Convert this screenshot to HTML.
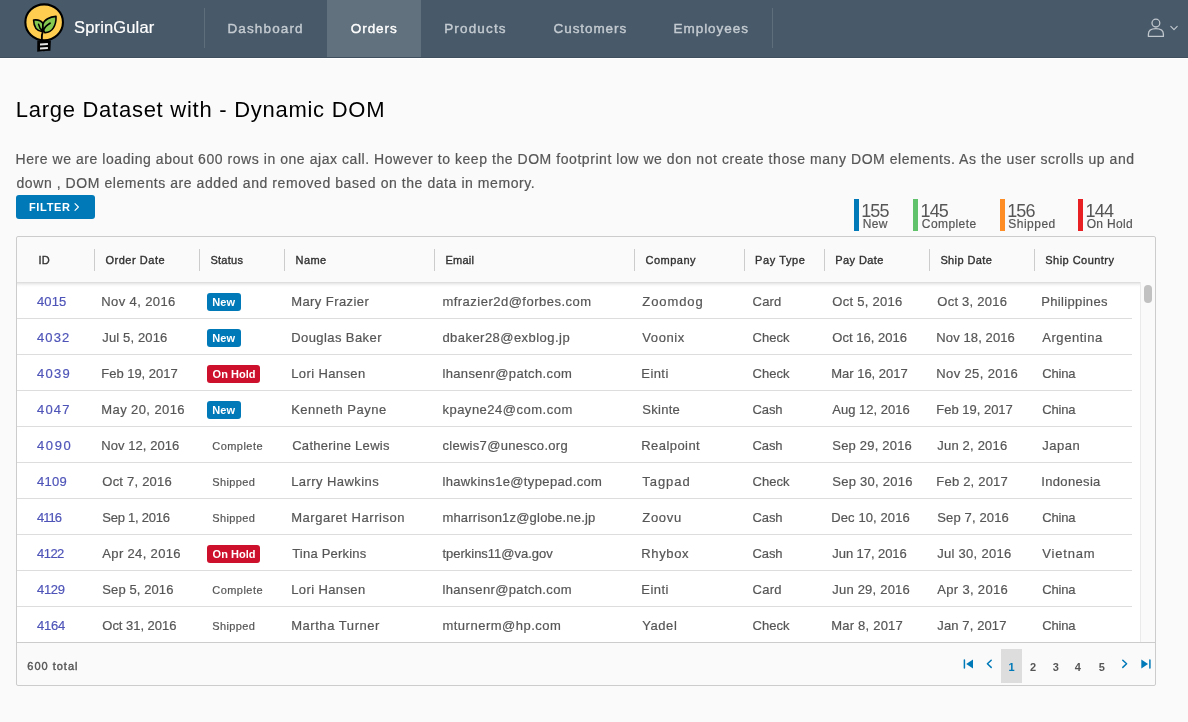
<!DOCTYPE html>
<html lang="en">
<head>
<meta charset="utf-8">
<title>SprinGular</title>
<style>
html,body{margin:0;padding:0}
body{width:1188px;height:722px;overflow:hidden;background:#fafafa;font-family:"Liberation Sans",sans-serif;color:#565656;position:relative;will-change:transform}
.abs,.t{position:absolute}
.t{white-space:nowrap;line-height:1}
header{position:absolute;left:0;top:0;width:1188px;height:57px;background:#485969}
.hline{position:absolute;left:0;top:57px;width:1188px;height:1px;background:#3f4f5e}
.wline{position:absolute;left:0;top:58px;width:1188px;height:1px;background:#fff}
.navbg{position:absolute;left:327px;top:0;width:94px;height:57px;background:#61717d}
.nav{top:21.5px;font-size:13.5px;color:#c4cbd1;-webkit-text-stroke:0.4px currentColor}
.nav.act{color:#fff}
.vsep{position:absolute;top:8px;width:1px;height:40px;background:#5e6e7b}
.brand{top:19px;font-size:16.5px;color:#fff;-webkit-text-stroke:0.2px #fff}
.h1{top:99px;font-size:22px;color:#000}
.p{font-size:14px;color:#565656;-webkit-text-stroke:0.2px #565656}
.btn{position:absolute;left:16px;top:195px;width:79px;height:24px;background:#0079b8;border-radius:3px}
.bt{top:202px;font-size:11px;font-weight:bold;color:#fff}
.bar{position:absolute;top:199px;width:5px;height:32px}
.num{top:201.5px;font-size:18px;color:#565656}
.lbl{top:217.7px;font-size:12px;color:#565656;-webkit-text-stroke:0.2px #565656}
.grid{position:absolute;left:16px;top:236px;width:1138px;height:448px;border:1px solid #ccc;border-radius:2px;background:#fafafa}
.rowsbg{position:absolute;left:17px;top:282px;width:1123px;height:360px;background:#fff;border-right:1px solid #eaeaea}
.hshadow{position:absolute;left:17px;top:282px;width:1123px;height:5px;background:linear-gradient(#d8d8d8,#ededed 35%,#f9f9f9 70%,#fff)}
.rl{position:absolute;left:17px;width:1115px;height:1px;background:#ddd}
.fl{position:absolute;left:17px;top:642px;width:1138px;height:1px;background:#ccc}
.csep{position:absolute;top:249px;width:1px;height:22px;background:#ccc}
.h{top:255px;font-size:11px;color:#313131;-webkit-text-stroke:0.35px #313131}
.c{font-size:13px;color:#565656;-webkit-text-stroke:0.2px currentColor}
.id{color:#4f55b8}
.badge{position:absolute;height:18px;border-radius:3px}
.b-new{background:#0079b8;width:34px}
.b-hold{background:#cd112d;width:53px}
.bx{font-size:11px;font-weight:bold;color:#fff}
.st{font-size:11px;color:#565656;-webkit-text-stroke:0.2px #565656}
.thumb{position:absolute;left:1144px;top:285px;width:8px;height:18px;border-radius:4px;background:#c1c1c1}
.pg{font-size:11px;font-weight:bold;color:#565656;top:661.5px}
.ft{top:661px;font-size:11px;color:#565656;-webkit-text-stroke:0.4px #565656}
.cur{position:absolute;left:1001px;top:649px;width:21px;height:34px;background:#ddd}
</style>
</head>
<body>
<header></header>
<div class="hline"></div>
<div class="wline"></div>
<div class="navbg"></div>
<svg class="abs" style="left:20px;top:0" width="48" height="56" viewBox="0 0 48 56">
<path d="M17.3 40.6 L30.9 40.6 L30.4 50.7 L24.4 51 L24 51.7 L23.4 51.1 L17.2 51.7 Z" fill="#000"/>
<path d="M20 43.5 L27.9 43 L27.9 45 L20 45.5 Z M20 47.5 L27.9 47 L27.9 49 L20 49.5 Z" fill="#e6e6e6"/>
<ellipse cx="24.15" cy="22.3" rx="18.8" ry="17.95" fill="#ffce51" stroke="#000" stroke-width="2.1"/>
<path d="M13.6 20 C17 19.6 21.2 20.8 22.8 23.2 C23.2 26 22.8 29.4 21.8 31.4 C16.3 30.8 13.8 26 13.6 20 Z" fill="#85c951" stroke="#000" stroke-width="1.6" stroke-linejoin="round"/>
<path d="M36 16.4 C30 16.8 24 19.5 22.9 24.5 C22.6 27.8 23.4 31 24.6 32.6 C32.5 33 36.4 25 36 16.4 Z" fill="#85c951" stroke="#000" stroke-width="1.6" stroke-linejoin="round"/>
<path d="M21.8 41 C21.5 37 21.8 33.5 23.2 30.5 C24.4 27.5 27.6 24.6 30 23.2" fill="none" stroke="#000" stroke-width="1.8" stroke-linecap="round"/>
<path d="M18.6 24.4 C19.2 27.2 20.8 29.8 22.8 31.2" fill="none" stroke="#000" stroke-width="1.6" stroke-linecap="round"/>
</svg>
<span class="t brand" style="left:74.1px;letter-spacing:0.136px;">SprinGular</span>
<div class="vsep" style="left:204px"></div>
<span class="t nav" style="left:227.5px;letter-spacing:1.121px;">Dashboard</span>
<span class="t nav act" style="left:350.8px;letter-spacing:0.938px;">Orders</span>
<span class="t nav" style="left:444.2px;letter-spacing:1.154px;">Products</span>
<span class="t nav" style="left:553.6px;letter-spacing:0.911px;">Customers</span>
<span class="t nav" style="left:673.5px;letter-spacing:0.959px;">Employees</span>
<div class="vsep" style="left:772px"></div>
<svg class="abs" style="left:1144px;top:14px" width="40" height="28" viewBox="0 0 40 28">
<circle cx="11.9" cy="9.1" r="3.9" fill="none" stroke="#c0c7cd" stroke-width="1.3"/>
<path d="M4.4 22.4 L4.4 20.2 C4.4 16.6 7.6 14.6 11.9 14.6 C16.2 14.6 19.4 16.6 19.4 20.2 L19.4 22.4 Z" fill="none" stroke="#c0c7cd" stroke-width="1.3" stroke-linejoin="round"/>
<path d="M26.8 12.4 L30 15.6 L33.2 12.4" fill="none" stroke="#c4cbd1" stroke-width="1.1" stroke-linecap="round" stroke-linejoin="round"/>
</svg>
<span class="t h1" style="left:15.7px;letter-spacing:0.736px;">Large Dataset with - Dynamic DOM</span>
<span class="t p" style="left:15.5px;top:152px;letter-spacing:0.555px;">Here we are loading about 600 rows in one ajax call. However to keep the DOM footprint low we don not create those many DOM elements. As the user scrolls up and</span>
<span class="t p" style="left:16.5px;top:176px;letter-spacing:0.566px;">down , DOM elements are added and removed based on the data in memory.</span>
<div class="btn"><svg class="abs" style="left:57px;top:7px" width="8" height="10" viewBox="0 0 8 10"><path d="M2 1.6 L5.4 5 L2 8.4" fill="none" stroke="#fff" stroke-width="1.1" stroke-linecap="round" stroke-linejoin="round"/></svg></div>
<span class="t bt" style="left:29px;letter-spacing:0.653px;">FILTER</span>
<div class="bar" style="left:854px;background:#0079b8"></div><span class="t num" style="left:861.2px;letter-spacing:-0.911px;">155</span><span class="t lbl" style="left:862.8px;letter-spacing:0.33px;">New</span>
<div class="bar" style="left:913px;background:#60c36c"></div><span class="t num" style="left:920.5px;letter-spacing:-0.861px;">145</span><span class="t lbl" style="left:921.8px;letter-spacing:0.417px;">Complete</span>
<div class="bar" style="left:1000px;background:#fe8d26"></div><span class="t num" style="left:1007.2px;letter-spacing:-0.911px;">156</span><span class="t lbl" style="left:1008.2px;letter-spacing:0.506px;">Shipped</span>
<div class="bar" style="left:1078px;background:#e82024"></div><span class="t num" style="left:1085.4px;letter-spacing:-0.761px;">144</span><span class="t lbl" style="left:1086.7px;letter-spacing:0.325px;">On Hold</span>
<div class="grid"></div>
<div class="rowsbg"></div>
<div class="hshadow"></div>
<div class="csep" style="left:94px"></div><div class="csep" style="left:199px"></div><div class="csep" style="left:284px"></div><div class="csep" style="left:434px"></div><div class="csep" style="left:634px"></div><div class="csep" style="left:744px"></div><div class="csep" style="left:824px"></div><div class="csep" style="left:929px"></div><div class="csep" style="left:1034px"></div>
<span class="t h" style="left:38.4px;letter-spacing:0.344px;">ID</span><span class="t h" style="left:105.4px;letter-spacing:0.545px;">Order Date</span><span class="t h" style="left:210.4px;letter-spacing:0.263px;">Status</span><span class="t h" style="left:295.6px;letter-spacing:0.392px;">Name</span><span class="t h" style="left:445.5px;letter-spacing:0.21px;">Email</span><span class="t h" style="left:645.5px;letter-spacing:0.487px;">Company</span><span class="t h" style="left:755px;letter-spacing:0.608px;">Pay Type</span><span class="t h" style="left:835.3px;letter-spacing:0.41px;">Pay Date</span><span class="t h" style="left:940.4px;letter-spacing:0.389px;">Ship Date</span><span class="t h" style="left:1045.3px;letter-spacing:0.465px;">Ship Country</span>
<div class="rl" style="top:318px"></div><span class="t c id" style="left:37px;top:295px;letter-spacing:0.103px;">4015</span><span class="t c" style="left:101.3px;top:295px;letter-spacing:0.383px;">Nov 4, 2016</span><div class="badge b-new" style="left:207px;top:293px"></div><span class="t bx" style="left:212.3px;top:297px;letter-spacing:0.069px;">New</span><span class="t c" style="left:291.2px;top:295px;letter-spacing:0.417px;">Mary Frazier</span><span class="t c" style="left:442.4px;top:295px;letter-spacing:0.486px;">mfrazier2d@forbes.com</span><span class="t c" style="left:642.3px;top:295px;letter-spacing:0.902px;">Zoomdog</span><span class="t c" style="left:752.6px;top:295px;letter-spacing:0.151px;">Card</span><span class="t c" style="left:832.3px;top:295px;letter-spacing:0.272px;">Oct 5, 2016</span><span class="t c" style="left:937.3px;top:295px;letter-spacing:0.242px;">Oct 3, 2016</span><span class="t c" style="left:1041.3px;top:295px;letter-spacing:0.333px;">Philippines</span>
<div class="rl" style="top:354px"></div><span class="t c id" style="left:37px;top:331px;letter-spacing:1.103px;">4032</span><span class="t c" style="left:102.3px;top:331px;letter-spacing:0.133px;">Jul 5, 2016</span><div class="badge b-new" style="left:207px;top:329px"></div><span class="t bx" style="left:212.3px;top:333px;letter-spacing:0.069px;">New</span><span class="t c" style="left:291.2px;top:331px;letter-spacing:0.422px;">Douglas Baker</span><span class="t c" style="left:442.4px;top:331px;letter-spacing:0.458px;">dbaker28@exblog.jp</span><span class="t c" style="left:642.3px;top:331px;letter-spacing:0.594px;">Voonix</span><span class="t c" style="left:752.6px;top:331px;letter-spacing:0.013px;">Check</span><span class="t c" style="left:832.3px;top:331px;letter-spacing:0.026px;">Oct 16, 2016</span><span class="t c" style="left:936.3px;top:331px;letter-spacing:0.109px;">Nov 18, 2016</span><span class="t c" style="left:1042.3px;top:331px;letter-spacing:0.535px;">Argentina</span>
<div class="rl" style="top:390px"></div><span class="t c id" style="left:37px;top:367px;letter-spacing:1.237px;">4039</span><span class="t c" style="left:101.3px;top:367px;letter-spacing:-0.026px;">Feb 19, 2017</span><div class="badge b-hold" style="left:207px;top:365px"></div><span class="t bx" style="left:212.6px;top:369px;letter-spacing:0.008px;">On Hold</span><span class="t c" style="left:291.2px;top:367px;letter-spacing:0.393px;">Lori Hansen</span><span class="t c" style="left:442.4px;top:367px;letter-spacing:0.376px;">lhansenr@patch.com</span><span class="t c" style="left:641.3px;top:367px;letter-spacing:0.425px;">Einti</span><span class="t c" style="left:752.6px;top:367px;letter-spacing:0.013px;">Check</span><span class="t c" style="left:831.3px;top:367px;letter-spacing:-0.025px;">Mar 16, 2017</span><span class="t c" style="left:936.3px;top:367px;letter-spacing:0.372px;">Nov 25, 2016</span><span class="t c" style="left:1042.3px;top:367px;letter-spacing:-0.184px;">China</span>
<div class="rl" style="top:426px"></div><span class="t c id" style="left:37px;top:403px;letter-spacing:1.17px;">4047</span><span class="t c" style="left:101.3px;top:403px;letter-spacing:0.405px;">May 20, 2016</span><div class="badge b-new" style="left:207px;top:401px"></div><span class="t bx" style="left:212.3px;top:405px;letter-spacing:0.069px;">New</span><span class="t c" style="left:291.2px;top:403px;letter-spacing:0.51px;">Kenneth Payne</span><span class="t c" style="left:442.4px;top:403px;letter-spacing:0.508px;">kpayne24@com.com</span><span class="t c" style="left:642.3px;top:403px;letter-spacing:0.28px;">Skinte</span><span class="t c" style="left:752.6px;top:403px;letter-spacing:-0.139px;">Cash</span><span class="t c" style="left:832.3px;top:403px;letter-spacing:0.008px;">Aug 12, 2016</span><span class="t c" style="left:936.3px;top:403px;letter-spacing:-0.008px;">Feb 19, 2017</span><span class="t c" style="left:1042.3px;top:403px;letter-spacing:-0.209px;">China</span>
<div class="rl" style="top:462px"></div><span class="t c id" style="left:37px;top:439px;letter-spacing:1.603px;">4090</span><span class="t c" style="left:101.3px;top:439px;letter-spacing:0.054px;">Nov 12, 2016</span><span class="t st" style="left:212.3px;top:441px;letter-spacing:0.449px;">Complete</span><span class="t c" style="left:292.2px;top:439px;letter-spacing:0.292px;">Catherine Lewis</span><span class="t c" style="left:442.4px;top:439px;letter-spacing:0.305px;">clewis7@unesco.org</span><span class="t c" style="left:641.3px;top:439px;letter-spacing:0.436px;">Realpoint</span><span class="t c" style="left:752.6px;top:439px;letter-spacing:-0.139px;">Cash</span><span class="t c" style="left:832.3px;top:439px;letter-spacing:0.199px;">Sep 29, 2016</span><span class="t c" style="left:937.3px;top:439px;letter-spacing:0.188px;">Jun 2, 2016</span><span class="t c" style="left:1042.3px;top:439px;letter-spacing:0.528px;">Japan</span>
<div class="rl" style="top:498px"></div><span class="t c id" style="left:37px;top:475px;letter-spacing:0.27px;">4109</span><span class="t c" style="left:102.3px;top:475px;letter-spacing:0.222px;">Oct 7, 2016</span><span class="t st" style="left:212.3px;top:477px;letter-spacing:0.358px;">Shipped</span><span class="t c" style="left:291.2px;top:475px;letter-spacing:0.437px;">Larry Hawkins</span><span class="t c" style="left:442.4px;top:475px;letter-spacing:0.361px;">lhawkins1e@typepad.com</span><span class="t c" style="left:642.3px;top:475px;letter-spacing:0.936px;">Tagpad</span><span class="t c" style="left:752.6px;top:475px;letter-spacing:0.013px;">Check</span><span class="t c" style="left:832.3px;top:475px;letter-spacing:0.253px;">Sep 30, 2016</span><span class="t c" style="left:936.3px;top:475px;letter-spacing:0.204px;">Feb 2, 2017</span><span class="t c" style="left:1041.3px;top:475px;letter-spacing:0.331px;">Indonesia</span>
<div class="rl" style="top:534px"></div><span class="t c id" style="left:37px;top:511px;letter-spacing:-0.975px;">4116</span><span class="t c" style="left:102.3px;top:511px;letter-spacing:-0.239px;">Sep 1, 2016</span><span class="t st" style="left:212.3px;top:513px;letter-spacing:0.358px;">Shipped</span><span class="t c" style="left:291.2px;top:511px;letter-spacing:0.53px;">Margaret Harrison</span><span class="t c" style="left:442.4px;top:511px;letter-spacing:0.209px;">mharrison1z@globe.ne.jp</span><span class="t c" style="left:642.3px;top:511px;letter-spacing:0.7px;">Zoovu</span><span class="t c" style="left:752.6px;top:511px;letter-spacing:-0.139px;">Cash</span><span class="t c" style="left:831.3px;top:511px;letter-spacing:0.1px;">Dec 10, 2016</span><span class="t c" style="left:937.3px;top:511px;letter-spacing:0.131px;">Sep 7, 2016</span><span class="t c" style="left:1042.3px;top:511px;letter-spacing:-0.209px;">China</span>
<div class="rl" style="top:570px"></div><span class="t c id" style="left:37px;top:547px;letter-spacing:-0.53px;">4122</span><span class="t c" style="left:102.3px;top:547px;letter-spacing:0.344px;">Apr 24, 2016</span><div class="badge b-hold" style="left:207px;top:545px"></div><span class="t bx" style="left:212.6px;top:549px;letter-spacing:0.008px;">On Hold</span><span class="t c" style="left:292.2px;top:547px;letter-spacing:0.212px;">Tina Perkins</span><span class="t c" style="left:442.4px;top:547px;letter-spacing:-0.007px;">tperkins11@va.gov</span><span class="t c" style="left:641.3px;top:547px;letter-spacing:0.624px;">Rhybox</span><span class="t c" style="left:752.6px;top:547px;letter-spacing:-0.139px;">Cash</span><span class="t c" style="left:832.3px;top:547px;letter-spacing:-0.068px;">Jun 17, 2016</span><span class="t c" style="left:937.3px;top:547px;letter-spacing:0.272px;">Jul 30, 2016</span><span class="t c" style="left:1042.3px;top:547px;letter-spacing:0.796px;">Vietnam</span>
<div class="rl" style="top:606px"></div><span class="t c id" style="left:37px;top:583px;letter-spacing:-0.297px;">4129</span><span class="t c" style="left:102.3px;top:583px;letter-spacing:0.101px;">Sep 5, 2016</span><span class="t st" style="left:212.3px;top:585px;letter-spacing:0.449px;">Complete</span><span class="t c" style="left:291.2px;top:583px;letter-spacing:0.393px;">Lori Hansen</span><span class="t c" style="left:442.4px;top:583px;letter-spacing:0.364px;">lhansenr@patch.com</span><span class="t c" style="left:641.3px;top:583px;letter-spacing:0.45px;">Einti</span><span class="t c" style="left:752.6px;top:583px;letter-spacing:0.251px;">Card</span><span class="t c" style="left:832.3px;top:583px;letter-spacing:0.205px;">Jun 29, 2016</span><span class="t c" style="left:937.3px;top:583px;letter-spacing:0.321px;">Apr 3, 2016</span><span class="t c" style="left:1042.3px;top:583px;letter-spacing:-0.209px;">China</span>
<span class="t c id" style="left:37px;top:619px;letter-spacing:-0.197px;">4164</span><span class="t c" style="left:102.3px;top:619px;letter-spacing:-0.028px;">Oct 31, 2016</span><span class="t st" style="left:212.3px;top:621px;letter-spacing:0.358px;">Shipped</span><span class="t c" style="left:291.2px;top:619px;letter-spacing:0.546px;">Martha Turner</span><span class="t c" style="left:442.4px;top:619px;letter-spacing:0.506px;">mturnerm@hp.com</span><span class="t c" style="left:642.3px;top:619px;letter-spacing:0.551px;">Yadel</span><span class="t c" style="left:752.6px;top:619px;letter-spacing:0.013px;">Check</span><span class="t c" style="left:831.3px;top:619px;letter-spacing:0.206px;">Mar 8, 2017</span><span class="t c" style="left:937.3px;top:619px;letter-spacing:0.118px;">Jan 7, 2017</span><span class="t c" style="left:1042.3px;top:619px;letter-spacing:-0.209px;">China</span>
<div class="fl"></div>
<div class="thumb"></div>
<span class="t ft" style="left:27.3px;letter-spacing:0.993px;">600 total</span>
<div class="cur"></div>
<svg class="abs" style="left:960px;top:656px" width="196" height="16" viewBox="0 0 196 16">
<g fill="none" stroke="#0079b8" stroke-width="1.5" stroke-linecap="round" stroke-linejoin="round">
<path d="M4.4 3.9 L4.4 12"/>
<path d="M31.2 4.2 L27.4 7.8 L31.2 11.4"/>
<path d="M162.8 4.2 L166.6 7.8 L162.8 11.4"/>
<path d="M189.9 3.9 L189.9 12"/>
</g>
<path d="M13 3.4 L6.2 7.9 L13 12.4 Z" fill="#0079b8"/>
<path d="M181.3 3.4 L188.1 7.9 L181.3 12.4 Z" fill="#0079b8"/>
</svg>
<span class="t pg" style="left:1008.5px;color:#0079b8">1</span><span class="t pg" style="left:1030.0px;">2</span><span class="t pg" style="left:1052.75px;">3</span><span class="t pg" style="left:1074.85px;">4</span><span class="t pg" style="left:1098.7px;">5</span>
</body>
</html>
